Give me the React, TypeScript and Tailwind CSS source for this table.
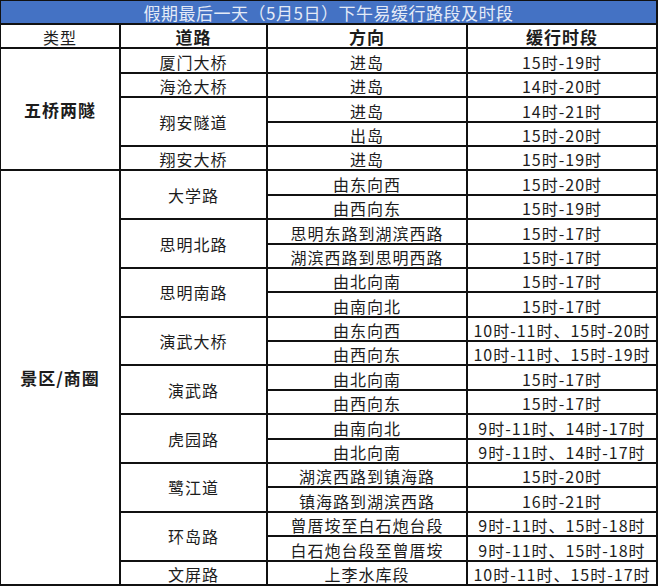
import { Fragment } from 'react';

const font = { fontFamily: '"Noto Sans CJK SC", "Noto Sans", sans-serif' };

type Dir = { dir: string; time: string };
type Road = { name: string; dirs: Dir[] };
type Group = { type: string; roads: Road[] };

const groups: Group[] = [
  {
    type: '五桥两隧',
    roads: [
      { name: '厦门大桥', dirs: [{ dir: '进岛', time: '15时-19时' }] },
      { name: '海沧大桥', dirs: [{ dir: '进岛', time: '14时-20时' }] },
      {
        name: '翔安隧道',
        dirs: [
          { dir: '进岛', time: '14时-21时' },
          { dir: '出岛', time: '15时-20时' },
        ],
      },
      { name: '翔安大桥', dirs: [{ dir: '进岛', time: '15时-19时' }] },
    ],
  },
  {
    type: '景区/商圈',
    roads: [
      {
        name: '大学路',
        dirs: [
          { dir: '由东向西', time: '15时-20时' },
          { dir: '由西向东', time: '15时-19时' },
        ],
      },
      {
        name: '思明北路',
        dirs: [
          { dir: '思明东路到湖滨西路', time: '15时-17时' },
          { dir: '湖滨西路到思明西路', time: '15时-17时' },
        ],
      },
      {
        name: '思明南路',
        dirs: [
          { dir: '由北向南', time: '15时-17时' },
          { dir: '由南向北', time: '15时-17时' },
        ],
      },
      {
        name: '演武大桥',
        dirs: [
          { dir: '由东向西', time: '10时-11时、15时-20时' },
          { dir: '由西向东', time: '10时-11时、15时-19时' },
        ],
      },
      {
        name: '演武路',
        dirs: [
          { dir: '由北向南', time: '15时-17时' },
          { dir: '由西向东', time: '15时-17时' },
        ],
      },
      {
        name: '虎园路',
        dirs: [
          { dir: '由南向北', time: '9时-11时、14时-17时' },
          { dir: '由北向南', time: '9时-11时、14时-17时' },
        ],
      },
      {
        name: '鹭江道',
        dirs: [
          { dir: '湖滨西路到镇海路', time: '15时-20时' },
          { dir: '镇海路到湖滨西路', time: '16时-21时' },
        ],
      },
      {
        name: '环岛路',
        dirs: [
          { dir: '曾厝垵至白石炮台段', time: '9时-11时、15时-18时' },
          { dir: '白石炮台段至曾厝垵', time: '9时-11时、15时-18时' },
        ],
      },
      { name: '文屏路', dirs: [{ dir: '上李水库段', time: '10时-11时、15时-17时' }] },
    ],
  },
];

const spanClass: Record<number, string> = {
  1: 'row-span-1',
  2: 'row-span-2',
  5: 'row-span-5',
  17: 'row-span-17',
};

function Cell({ children, span = 1, bold = false }: { children: React.ReactNode; span?: number; bold?: boolean }) {
  return (
    <div
      className={`${spanClass[span]} bg-white flex justify-center text-[16px] tracking-[1px] leading-none text-[#1c1c1c] ${
        span > 1 ? 'items-center' : 'items-end pb-[2px]'
      } ${bold ? 'font-bold text-[17px]' : ''}`}
    >
      {children}
    </div>
  );
}

export default function App() {
  return (
    <div className="w-[660px] h-[587px] bg-white" style={font}>
      <div className="w-[658px] h-[586px] bg-[#111] pt-[1px] pl-[1px] pr-[2px] pb-[2px] grid grid-cols-[118px_145px_198px_188px] grid-rows-[22px_repeat(23,minmax(0,1fr))] gap-[2px]">
        <div className="col-span-4 bg-[#4472c4] text-[#e3eaf7] text-[17px] tracking-[0.5px] leading-none flex items-center justify-center">
          假期最后一天（5月5日）下午易缓行路段及时段
        </div>

        <Cell>类型</Cell>
        <Cell bold>道路</Cell>
        <Cell bold>方向</Cell>
        <Cell bold>缓行时段</Cell>

        {groups.map(g => {
          const rows = g.roads.reduce((n, r) => n + r.dirs.length, 0);
          return g.roads.map((road, ri) =>
            road.dirs.map((d, di) => (
              <Fragment key={`${g.type}-${road.name}-${di}`}>
                {ri === 0 && di === 0 && (
                  <Cell span={rows} bold>
                    {g.type}
                  </Cell>
                )}
                {di === 0 && <Cell span={road.dirs.length}>{road.name}</Cell>}
                <Cell>{d.dir}</Cell>
                <Cell>{d.time}</Cell>
              </Fragment>
            ))
          );
        })}
      </div>
    </div>
  );
}
